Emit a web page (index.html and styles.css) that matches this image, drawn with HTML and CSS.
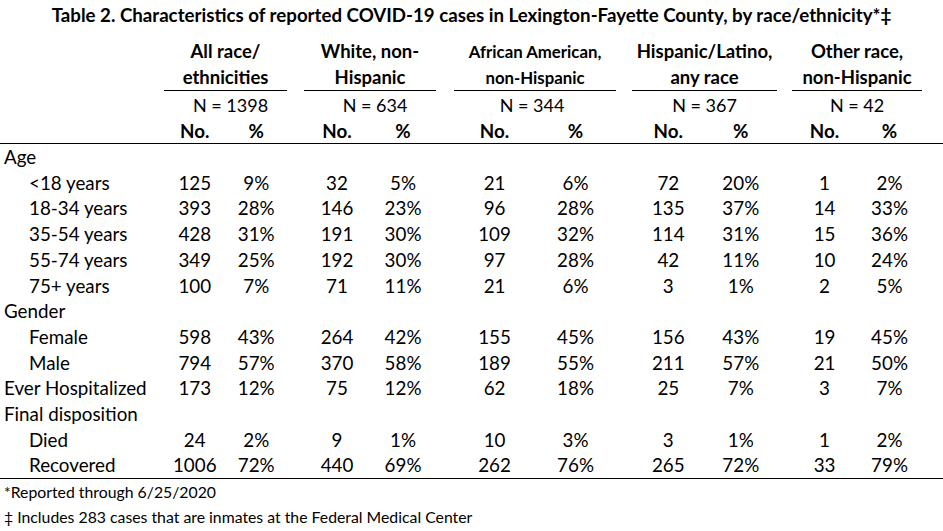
FILE: index.html
```html
<!DOCTYPE html>
<html lang="en">
<head>
<meta charset="utf-8">
<title>Table 2</title>
<link rel="stylesheet" href="styles.css">
</head>
<body>
<h1 class="title">Table 2. Characteristics of reported COVID-19 cases in Lexington-Fayette County, by race/ethnicity*‡</h1>
<table class="data">
  <colgroup>
    <col class="c-label">
    <col class="c-g1"><col class="c-g1">
    <col class="c-s1">
    <col class="c-g2"><col class="c-g2">
    <col class="c-s2">
    <col class="c-g3"><col class="c-g3">
    <col class="c-s3">
    <col class="c-g4"><col class="c-g4">
    <col class="c-s4">
    <col class="c-g5"><col class="c-g5">
    <col class="c-s5">
  </colgroup>
  <thead>
    <tr class="grp">
      <th></th>
      <th colspan="2" class="gh">All race/<br>ethnicities</th><th></th>
      <th colspan="2" class="gh">White, non-<br>Hispanic</th><th></th>
      <th colspan="2" class="gh small">African American,<br>non-Hispanic</th><th></th>
      <th colspan="2" class="gh">Hispanic/Latino,<br>any race</th><th></th>
      <th colspan="2" class="gh">Other race,<br>non-Hispanic</th><th></th>
    </tr>
    <tr class="nrow">
      <td></td>
      <td colspan="2" class="shift">N = 1398</td><td></td>
      <td colspan="2" class="shift">N = 634</td><td></td>
      <td colspan="2" class="unshift">N = 344</td><td></td>
      <td colspan="2">N = 367</td><td></td>
      <td colspan="2">N = 42</td><td></td>
    </tr>
    <tr class="sub">
      <td></td>
      <th>No.</th><th>%</th><td></td>
      <th>No.</th><th>%</th><td></td>
      <th>No.</th><th>%</th><td></td>
      <th>No.</th><th>%</th><td></td>
      <th>No.</th><th>%</th><td></td>
    </tr>
  </thead>
  <tbody>
    <tr><td class="lab">Age</td><td></td><td></td><td></td><td></td><td></td><td></td><td></td><td></td><td></td><td></td><td></td><td></td><td></td><td></td><td></td></tr>
    <tr><td class="lab ind">&lt;18 years</td><td>125</td><td>9%</td><td></td><td>32</td><td>5%</td><td></td><td>21</td><td>6%</td><td></td><td>72</td><td>20%</td><td></td><td>1</td><td>2%</td><td></td></tr>
    <tr><td class="lab ind">18-34 years</td><td>393</td><td>28%</td><td></td><td>146</td><td>23%</td><td></td><td>96</td><td>28%</td><td></td><td>135</td><td>37%</td><td></td><td>14</td><td>33%</td><td></td></tr>
    <tr><td class="lab ind">35-54 years</td><td>428</td><td>31%</td><td></td><td>191</td><td>30%</td><td></td><td>109</td><td>32%</td><td></td><td>114</td><td>31%</td><td></td><td>15</td><td>36%</td><td></td></tr>
    <tr><td class="lab ind">55-74 years</td><td>349</td><td>25%</td><td></td><td>192</td><td>30%</td><td></td><td>97</td><td>28%</td><td></td><td>42</td><td>11%</td><td></td><td>10</td><td>24%</td><td></td></tr>
    <tr><td class="lab ind">75+ years</td><td>100</td><td>7%</td><td></td><td>71</td><td>11%</td><td></td><td>21</td><td>6%</td><td></td><td>3</td><td>1%</td><td></td><td>2</td><td>5%</td><td></td></tr>
    <tr><td class="lab">Gender</td><td></td><td></td><td></td><td></td><td></td><td></td><td></td><td></td><td></td><td></td><td></td><td></td><td></td><td></td><td></td></tr>
    <tr><td class="lab ind">Female</td><td>598</td><td>43%</td><td></td><td>264</td><td>42%</td><td></td><td>155</td><td>45%</td><td></td><td>156</td><td>43%</td><td></td><td>19</td><td>45%</td><td></td></tr>
    <tr><td class="lab ind">Male</td><td>794</td><td>57%</td><td></td><td>370</td><td>58%</td><td></td><td>189</td><td>55%</td><td></td><td>211</td><td>57%</td><td></td><td>21</td><td>50%</td><td></td></tr>
    <tr><td class="lab">Ever Hospitalized</td><td>173</td><td>12%</td><td></td><td>75</td><td>12%</td><td></td><td>62</td><td>18%</td><td></td><td>25</td><td>7%</td><td></td><td>3</td><td>7%</td><td></td></tr>
    <tr><td class="lab">Final disposition</td><td></td><td></td><td></td><td></td><td></td><td></td><td></td><td></td><td></td><td></td><td></td><td></td><td></td><td></td><td></td></tr>
    <tr><td class="lab ind">Died</td><td>24</td><td>2%</td><td></td><td>9</td><td>1%</td><td></td><td>10</td><td>3%</td><td></td><td>3</td><td>1%</td><td></td><td>1</td><td>2%</td><td></td></tr>
    <tr class="last"><td class="lab ind">Recovered</td><td>1006</td><td>72%</td><td></td><td>440</td><td>69%</td><td></td><td>262</td><td>76%</td><td></td><td>265</td><td>72%</td><td></td><td>33</td><td>79%</td><td></td></tr>
  </tbody>
</table>
<p class="note">*Reported through 6/25/2020</p>
<p class="note">‡ Includes 283 cases that are inmates at the Federal Medical Center</p>
</body>
</html>
```
FILE: styles.css
```css
html, body {
  margin: 0;
  padding: 0;
  background: #ffffff;
  color: #000000;
  font-family: Lato, "Open Sans", sans-serif;
  font-size: 18.8px;
}

.title {
  margin: 0;
  padding-top: 4px;
  height: 39px;
  box-sizing: border-box;
  font-size: 18.7px;
  font-weight: 700;
  text-align: center;
  line-height: 22px;
}

.data {
  width: 943px;
  border-collapse: collapse;
  table-layout: fixed;
}

.c-label { width: 164px; }
.c-g1 { width: 61.5px; }
.c-s1 { width: 17px; }
.c-g2 { width: 66px; }
.c-s2 { width: 18px; }
.c-g3 { width: 81px; }
.c-s3 { width: 16px; }
.c-g4 { width: 72.5px; }
.c-s4 { width: 15px; }
.c-g5 { width: 65px; }
.c-s5 { width: 21px; }

.data td, .data th {
  padding: 0;
  text-align: center;
  white-space: nowrap;
  height: 26px;
  line-height: 26px;
  font-weight: 400;
}

.data tbody td {
  height: 25.7px;
  line-height: 25.7px;
}

.grp th {
  height: 50px;
  line-height: 25.5px;
  vertical-align: top;
  font-size: 18.5px;
}

.data .gh {
  font-weight: 700;
  border-bottom: 1px solid #000;
}

.data .gh.small {
  font-size: 16.8px;
}

.nrow td {
  height: 25px;
  line-height: 28px;
  font-size: 18px;
}

.shift { padding-left: 10px !important; }
.unshift { padding-right: 6px !important; }

.sub th, .sub td {
  height: 24px;
  line-height: 24px;
}

.sub th {
  font-weight: 700;
  border-bottom: 1px solid #000;
}

.sub td {
  border-bottom: 1px solid #000;
}

.data .lab {
  text-align: left;
  padding-left: 4px;
}

.data .lab.ind {
  padding-left: 29px;
}

.last td {
  border-bottom: 1px solid #000;
}

.note {
  margin: 0;
  padding-left: 4px;
  height: 25px;
  line-height: 25px;
  font-size: 15.8px;
}
```
